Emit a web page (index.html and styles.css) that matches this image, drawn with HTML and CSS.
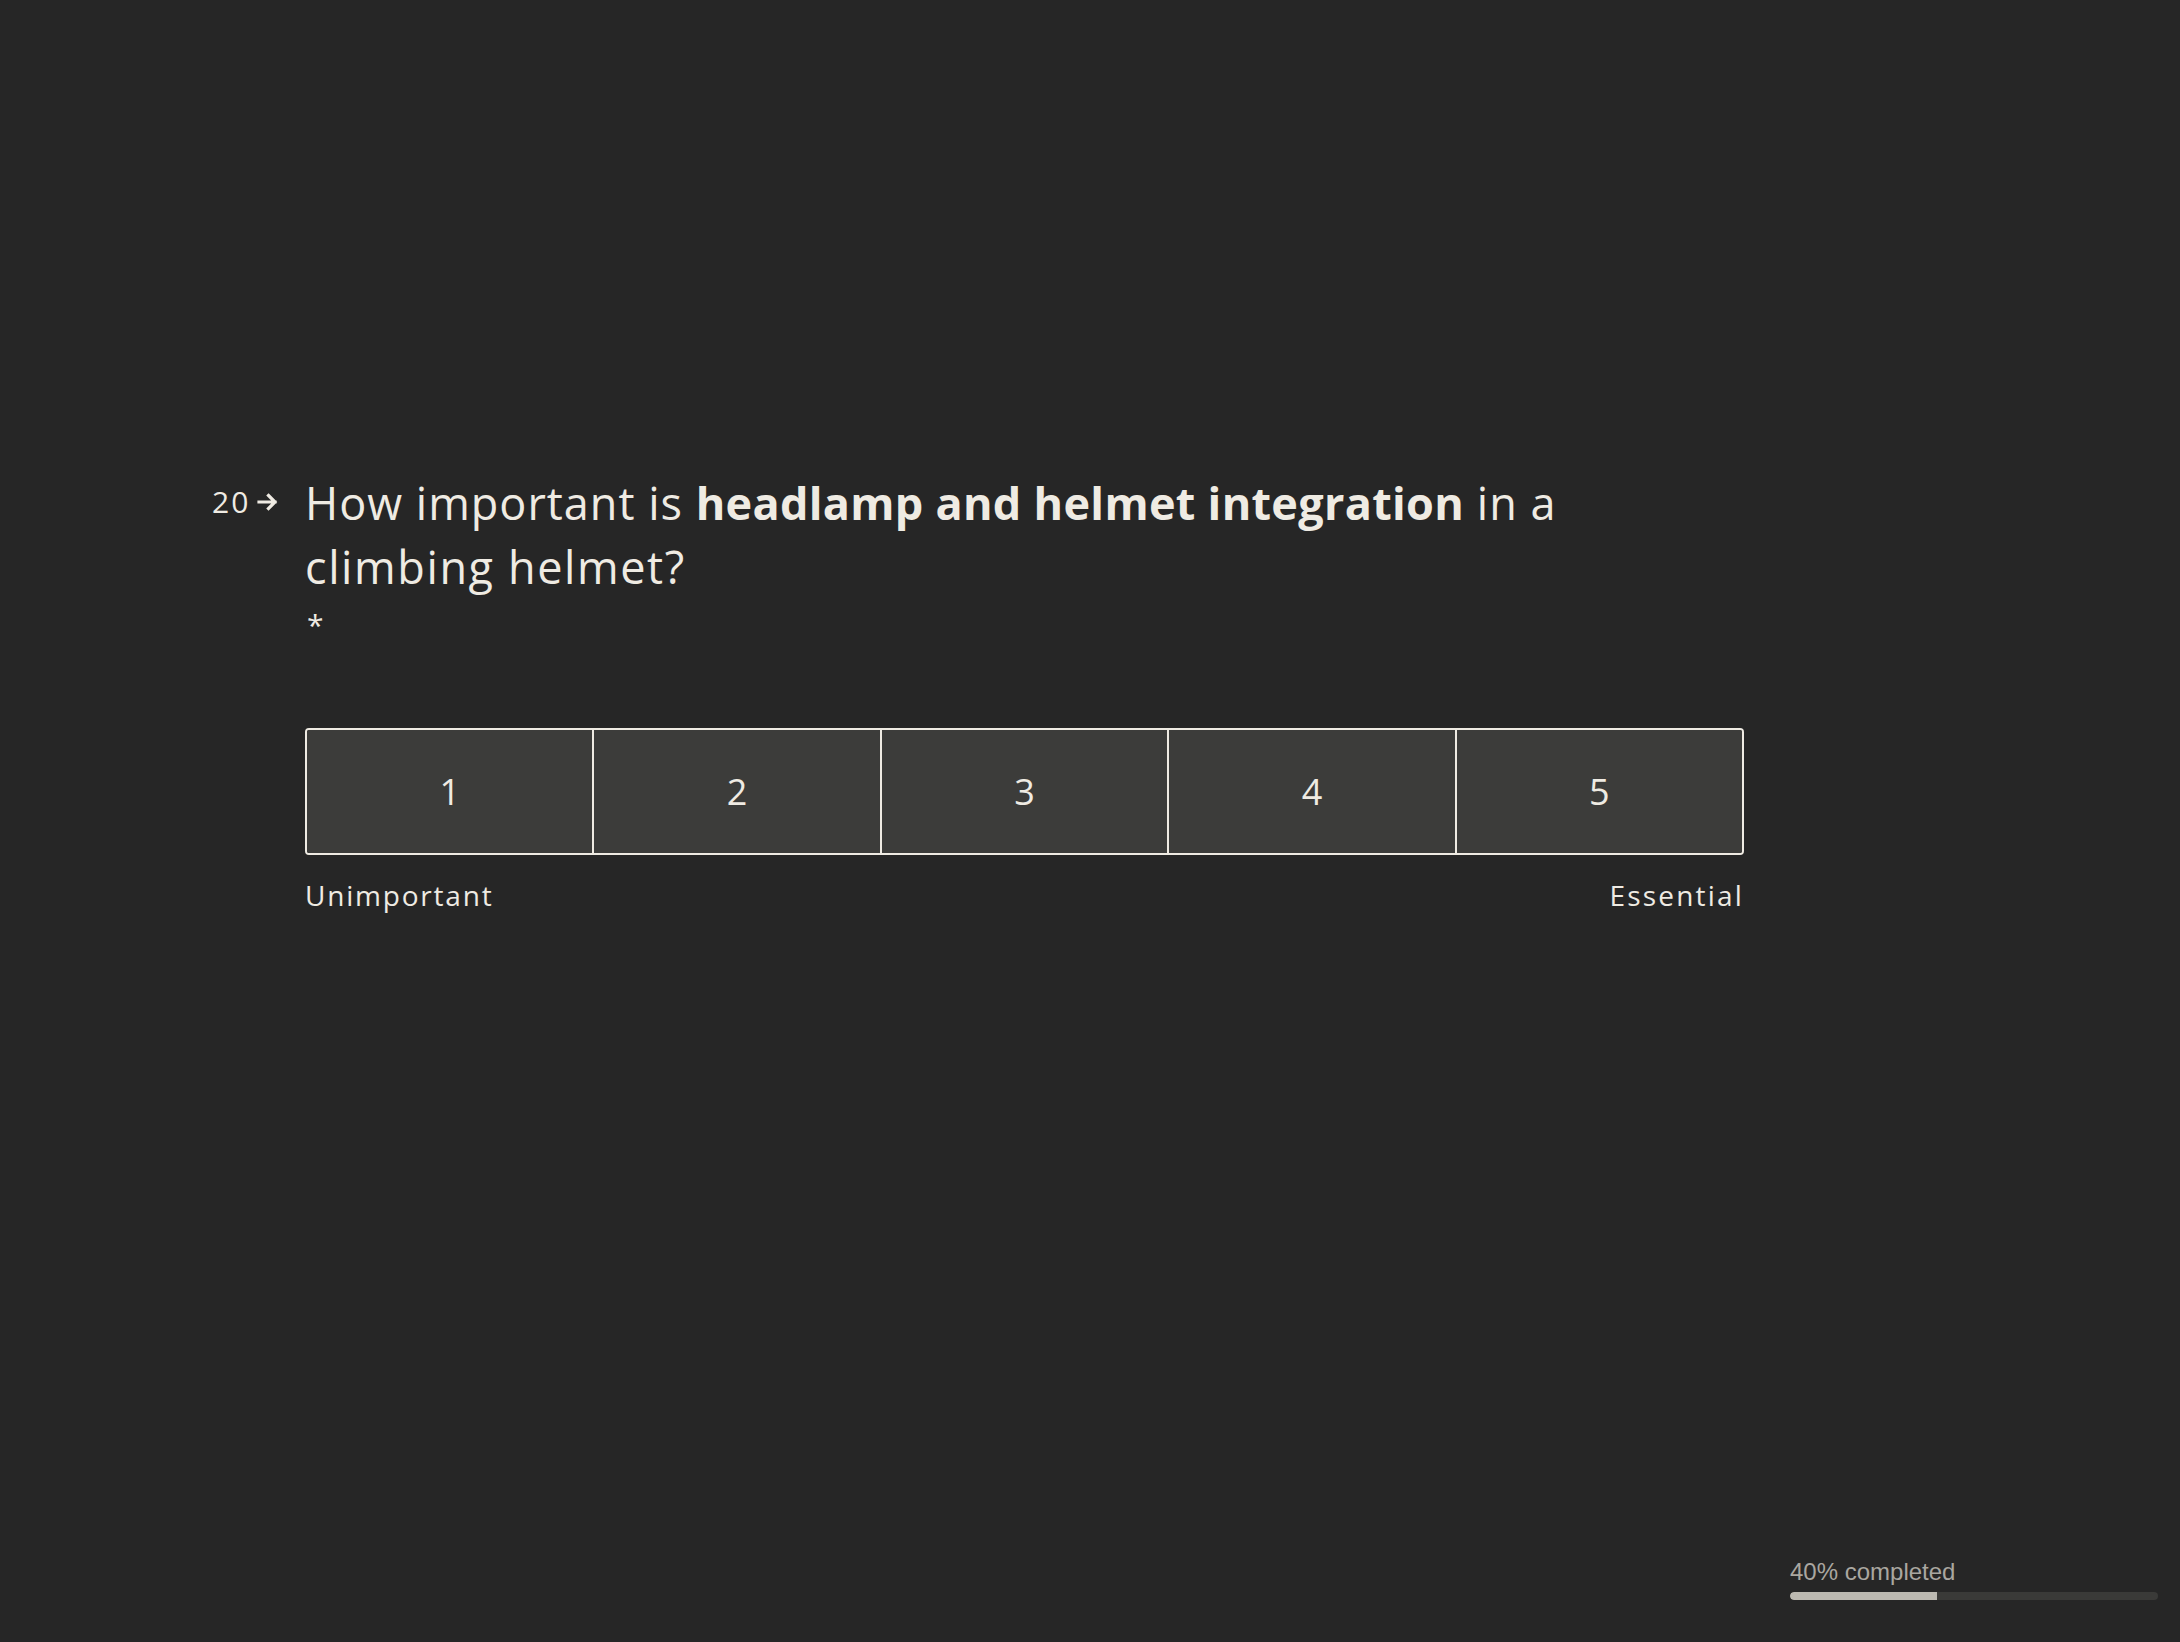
FILE: index.html
```html
<!DOCTYPE html>
<html lang="en">
<head>
<meta charset="utf-8">
<title>Question 20</title>
<link rel="stylesheet" href="styles.css">
</head>
<body>
<main class="page">
  <section class="question">
    <div class="qnum">
      <span class="qnum-text">20</span>
      <svg class="qnum-arrow" width="22" height="18" viewBox="0 0 22 18" aria-hidden="true">
        <path d="M2 9 H18 M11.5 2.5 L18 9 L11.5 15.5" fill="none" stroke="#efebe3" stroke-width="3.2" stroke-linecap="square" stroke-linejoin="miter"/>
      </svg>
    </div>
    <div class="qbody">
      <h1 class="qtitle">How important is <strong>headlamp and helmet integration</strong> in a <span class="wide">climbing helmet?</span></h1>
      <div class="required">*</div>
      <div class="scale">
        <button class="cell">1</button>
        <button class="cell">2</button>
        <button class="cell">3</button>
        <button class="cell">4</button>
        <button class="cell">5</button>
      </div>
      <div class="labels">
        <span>Unimportant</span>
        <span>Essential</span>
      </div>
    </div>
  </section>
</main>
<div class="progress">
  <div class="progress-text">40% completed</div>
  <div class="progress-track"><div class="progress-fill" style="width:40%"></div></div>
</div>
</body>
</html>
```

FILE: styles.css
```css
html, body {
  margin: 0;
  padding: 0;
  background: #262626;
  height: 100%;
}
body {
  font-family: "Open Sans", "Noto Sans", sans-serif;
  color: #efebe3;
  overflow: hidden;
}
.page {
  padding-top: 471px;
  padding-left: 212px;
}
.question {
  display: flex;
  align-items: flex-start;
}
.qnum {
  flex: 0 0 93px;
  display: flex;
  align-items: center;
  gap: 7px;
  height: 64px;
  margin-top: -1px;
}
.qnum-text {
  font-size: 30px;
  line-height: 1;
  letter-spacing: 2px;
}
.qnum-arrow {
  display: block;
}
.qbody {
  width: 1439px;
}
.qtitle {
  margin: 0;
  font-size: 45px;
  font-weight: 400;
  line-height: 64px;
  letter-spacing: 1px;
  max-width: 1380px;
}
.qtitle strong {
  font-weight: 700;
  letter-spacing: 0.3px;
}
.qtitle .wide {
  letter-spacing: 1.6px;
}
.required {
  font-size: 30px;
  line-height: 30px;
  height: 30px;
  margin-top: 11px;
  padding-left: 2px;
}
.scale {
  margin-top: 88px;
  display: flex;
  height: 127px;
  border: 2px solid #efebe3;
  border-radius: 4px;
  box-sizing: border-box;
  overflow: hidden;
}
.cell {
  flex: 1 1 0;
  background: #3c3c3a;
  border: 0;
  border-left: 2px solid #efebe3;
  color: #efebe3;
  font-family: "Open Sans", "Noto Sans", sans-serif;
  font-size: 36px;
  padding: 0;
  margin: 0;
}
.cell:first-child {
  border-left: 0;
}
.labels {
  display: flex;
  justify-content: space-between;
  margin-top: 20px;
  font-size: 28px;
  line-height: 40px;
  letter-spacing: 1.8px;
}
.labels span:last-child {
  letter-spacing: 2.2px;
}
.progress {
  position: absolute;
  right: 22px;
  bottom: 42px;
  width: 368px;
  font-family: "Liberation Sans", Arial, sans-serif;
}
.progress-text {
  font-size: 24px;
  line-height: 28px;
  color: #aaa7a0;
  margin-bottom: 6px;
}
.progress-track {
  height: 8px;
  border-radius: 4px;
  background: #3a3a38;
  overflow: hidden;
}
.progress-fill {
  height: 100%;
  background: #bcb9b1;
  border-radius: 4px 0 0 4px;
}
```
